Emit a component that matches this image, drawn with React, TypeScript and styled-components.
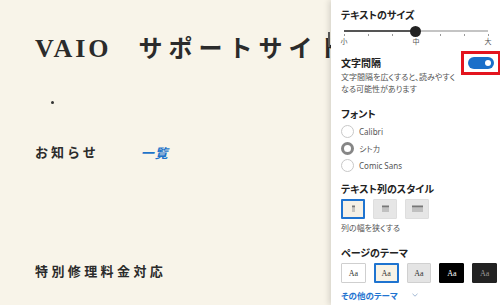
import styled, { createGlobalStyle } from 'styled-components';

const GlobalStyle = createGlobalStyle`
	html, body {
		margin: 0;
		padding: 0;
		width: 500px;
		height: 305px;
		overflow: hidden;
	}
	body {
		font-family: 'Noto Sans CJK JP', 'Noto Sans', sans-serif;
	}
`;

const Page = styled.div`
	display: flex;
	width: 500px;
	height: 305px;
	overflow: hidden;
`;

const Main = styled.div`
	flex: 1;
	min-width: 0;
	overflow: hidden;
	background: #f8f4e9;
	padding-left: 35px;
	color: #2b2b2b;
	white-space: nowrap;
`;

const TitleRow = styled.h1`
	margin: 32px 0 0;
	height: 30px;
	line-height: 30px;
	display: flex;
	align-items: baseline;
	font-weight: 700;
`;

const Logo = styled.span`
	font-family: 'Liberation Serif', serif;
	font-size: 26px;
	letter-spacing: 3px;
	margin-right: 27px;
`;

const SiteName = styled.span`
	font-family: 'Noto Sans CJK JP', sans-serif;
	font-size: 24px;
	letter-spacing: 6px;
`;

const Bullet = styled.div`
	width: 3px;
	height: 3px;
	border-radius: 50%;
	background: #333;
	margin: 39px 0 0 16px;
`;

const NewsRow = styled.div`
	margin-top: 38px;
	display: flex;
	align-items: center;
	height: 20px;
`;

const SectionTitle = styled.h2`
	margin: 0;
	font-size: 13px;
	font-weight: 700;
	line-height: 20px;
	letter-spacing: 3px;
`;

const MoreLink = styled.a`
	margin-left: 42px;
	color: #1f74c9;
	font-size: 13px;
	font-weight: 700;
	font-style: italic;
	letter-spacing: 1px;
	text-decoration: none;
`;

const RepairTitle = styled(SectionTitle)`
	margin-top: 99px;
	letter-spacing: 3.4px;
`;

const Panel = styled.aside`
	position: relative;
	width: 169px;
	flex-shrink: 0;
	background: #fff;
	box-shadow: -2px 0 6px rgba(0, 0, 0, 0.14);
	padding: 8px 3px 0 10px;
	box-sizing: border-box;
	font-feature-settings: 'palt';
	color: #222;

	&::before {
		content: '';
		position: absolute;
		left: -3px;
		top: 32px;
		width: 2px;
		height: 15px;
		background: #555;
	}
`;

const PanelHeading = styled.div<{ $top?: number }>`
	font-size: 10px;
	font-weight: 700;
	line-height: 14px;
	margin-top: ${(p) => p.$top ?? 0}px;
`;

const Slider = styled.div`
	position: relative;
	width: 152px;
	height: 26px;
`;

const Track = styled.div`
	position: absolute;
	left: 3px;
	top: 8px;
	width: 144px;
	height: 2px;
	background: linear-gradient(to right, #555 50%, #c4c4c4 50%);
`;

const Thumb = styled.div`
	position: absolute;
	left: 69px;
	top: 4px;
	width: 11px;
	height: 11px;
	border-radius: 50%;
	background: #222;
`;

const Tick = styled.div`
	position: absolute;
	top: 12px;
	width: 1px;
	height: 2px;
	background: #999;
`;

const TickLabel = styled.span`
	position: absolute;
	top: 15px;
	width: 12px;
	margin-left: -6px;
	text-align: center;
	font-size: 7px;
	line-height: 9px;
	color: #555;
`;

const SpacingRow = styled.div`
	display: flex;
	justify-content: space-between;
	align-items: flex-start;
	margin-top: 8px;
`;

const Description = styled.p`
	margin: 1px 0 0;
	font-size: 8px;
	line-height: 12px;
	color: #555;
	width: 120px;
`;

const HighlightBox = styled.div`
	margin-top: -5px;
	border: 3px solid #e3141e;
	padding: 3px 4px;
	display: flex;
`;

const Toggle = styled.div`
	position: relative;
	width: 26px;
	height: 12px;
	border-radius: 6px;
	background: #1a6fc9;

	&::after {
		content: '';
		position: absolute;
		right: 3px;
		top: 3px;
		width: 6px;
		height: 6px;
		border-radius: 50%;
		background: #fff;
	}
`;

const RadioList = styled.div`
	display: flex;
	flex-direction: column;
	gap: 4px;
	margin-top: 4px;
`;

const RadioRow = styled.label`
	display: flex;
	align-items: center;
	gap: 5px;
	height: 13px;
	font-size: 8px;
	color: #555;
	font-family: 'Noto Sans', 'Noto Sans CJK JP', sans-serif;
`;

const RadioCircle = styled.span<{ $checked?: boolean }>`
	width: 13px;
	height: 13px;
	box-sizing: border-box;
	border-radius: 50%;
	border: ${(p) => (p.$checked ? '3.5px solid #868686' : '1px solid #c8c8c8')};
	background: #fff;
`;

const ButtonRow = styled.div`
	display: flex;
	gap: 8px;
	margin-top: 3px;
`;

const ColumnButton = styled.button<{ $active?: boolean }>`
	width: 24px;
	height: 20px;
	padding: 0;
	box-sizing: border-box;
	display: flex;
	align-items: center;
	justify-content: center;
	background: ${(p) => (p.$active ? '#f6f1e6' : '#e6e6e6')};
	border: ${(p) => (p.$active ? '2px solid #1f74d0' : '1px solid #dedede')};
	border-radius: 1px;
`;

const Hint = styled.div`
	margin-top: 3px;
	font-size: 8px;
	line-height: 12px;
	color: #555;
`;

const ThemeButton = styled.button<{ $bg: string; $fg: string; $border: string; $width?: number }>`
	width: 25px;
	height: 20px;
	padding: 0;
	box-sizing: border-box;
	background: ${(p) => p.$bg};
	color: ${(p) => p.$fg};
	border: ${(p) => p.$width ?? 1}px solid ${(p) => p.$border};
	border-radius: 1px;
	font-family: 'Liberation Serif', serif;
	font-size: 8px;
`;

const OtherThemes = styled.a`
	display: flex;
	align-items: center;
	gap: 14px;
	margin-top: 5px;
	color: #1f74d0;
	font-size: 8.5px;
	font-weight: 700;
	line-height: 14px;
	text-decoration: none;
`;

const ColumnIcon = ({ w }: { w: number }) => (
	<svg width={w + 2} height="8" viewBox={`0 0 ${w + 2} 8`}>
		<rect x="1" y="0.5" width={w} height="2" fill="#777" />
		<rect x="1" y="3.5" width={w} height="1" fill="#999" />
		<rect x="1" y="5.5" width={w} height="1" fill="#999" />
	</svg>
);

const Chevron = () => (
	<svg width="6" height="4" viewBox="0 0 6 4">
		<path d="M0.5 0.8 L3 3.2 L5.5 0.8" fill="none" stroke="#8aa6c8" strokeWidth="0.8" />
	</svg>
);

const ticks = [0, 24, 48, 72, 96, 120, 144];

const themes = [
	{ bg: '#fff', fg: '#333', border: '#cfcfcf' },
	{ bg: '#f8f3e6', fg: '#333', border: '#1f74d0', width: 2 },
	{ bg: '#e4e4e4', fg: '#333', border: '#d0d0d0' },
	{ bg: '#000', fg: '#fff', border: '#000' },
	{ bg: '#222', fg: '#999', border: '#222' },
];

export default function App() {
	return (
		<Page>
			<GlobalStyle />
			<Main>
				<TitleRow>
					<Logo>VAIO</Logo>
					<SiteName>サポートサイト</SiteName>
				</TitleRow>
				<Bullet />
				<NewsRow>
					<SectionTitle>お知らせ</SectionTitle>
					<MoreLink href="#">一覧</MoreLink>
				</NewsRow>
				<RepairTitle>特別修理料金対応</RepairTitle>
			</Main>
			<Panel>
				<PanelHeading>テキストのサイズ</PanelHeading>
				<Slider>
					<Track />
					{ticks.map((t) => (
						<Tick key={t} style={{ left: 3 + t }} />
					))}
					<Thumb />
					<TickLabel style={{ left: 3 }}>小</TickLabel>
					<TickLabel style={{ left: 75 }}>中</TickLabel>
					<TickLabel style={{ left: 147 }}>大</TickLabel>
				</Slider>
				<SpacingRow>
					<div>
						<PanelHeading>文字間隔</PanelHeading>
						<Description>文字間隔を広くすると、読みやすくなる可能性があります</Description>
					</div>
					<HighlightBox>
						<Toggle />
					</HighlightBox>
				</SpacingRow>
				<PanelHeading $top={12}>フォント</PanelHeading>
				<RadioList>
					<RadioRow>
						<RadioCircle />
						Calibri
					</RadioRow>
					<RadioRow>
						<RadioCircle $checked />
						シトカ
					</RadioRow>
					<RadioRow>
						<RadioCircle />
						Comic Sans
					</RadioRow>
				</RadioList>
				<PanelHeading $top={10}>テキスト列のスタイル</PanelHeading>
				<ButtonRow>
					<ColumnButton $active>
						<ColumnIcon w={3} />
					</ColumnButton>
					<ColumnButton>
						<ColumnIcon w={7} />
					</ColumnButton>
					<ColumnButton>
						<ColumnIcon w={11} />
					</ColumnButton>
				</ButtonRow>
				<Hint>列の幅を狭くする</Hint>
				<PanelHeading $top={12}>ページのテーマ</PanelHeading>
				<ButtonRow>
					{themes.map((t, i) => (
						<ThemeButton key={i} $bg={t.bg} $fg={t.fg} $border={t.border} $width={t.width}>
							Aa
						</ThemeButton>
					))}
				</ButtonRow>
				<OtherThemes href="#">
					その他のテーマ
					<Chevron />
				</OtherThemes>
			</Panel>
		</Page>
	);
}
